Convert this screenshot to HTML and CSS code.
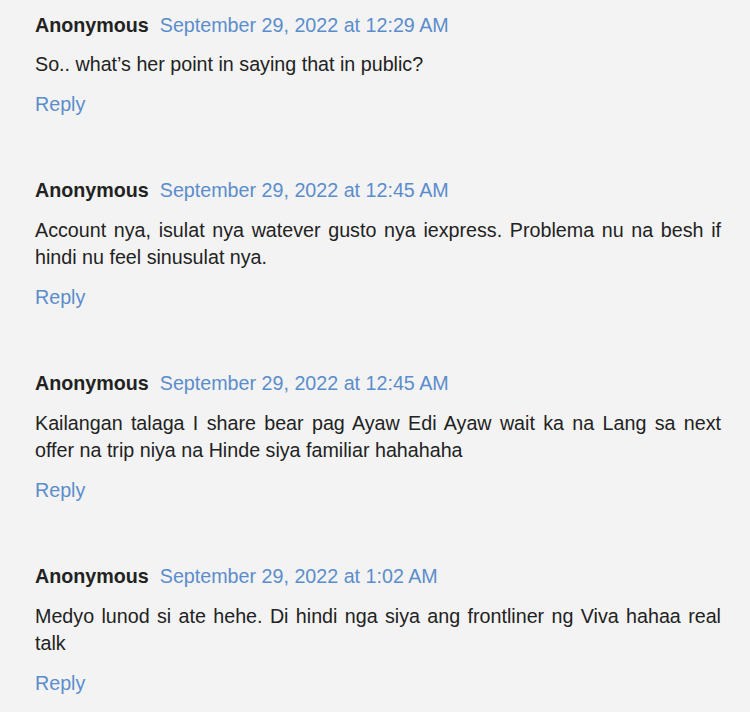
FILE: index.html
```html
<!DOCTYPE html>
<html>
<head>
<meta charset="utf-8">
<link rel="stylesheet" href="styles.css">
</head>
<body>
<div class="comments">
  <div class="comment">
    <div class="head"><span class="author">Anonymous</span><a class="date">September 29, 2022 at 12:29 AM</a></div>
    <p class="text">So.. what’s her point in saying that in public?</p>
    <a class="reply">Reply</a>
  </div>
  <div class="comment">
    <div class="head"><span class="author">Anonymous</span><a class="date">September 29, 2022 at 12:45 AM</a></div>
    <p class="text">Account nya, isulat nya watever gusto nya iexpress. Problema nu na besh if hindi nu feel sinusulat nya.</p>
    <a class="reply">Reply</a>
  </div>
  <div class="comment">
    <div class="head"><span class="author">Anonymous</span><a class="date">September 29, 2022 at 12:45 AM</a></div>
    <p class="text">Kailangan talaga I share bear pag Ayaw Edi Ayaw wait ka na Lang sa next offer na trip niya na Hinde siya familiar hahahaha</p>
    <a class="reply">Reply</a>
  </div>
  <div class="comment">
    <div class="head"><span class="author">Anonymous</span><a class="date">September 29, 2022 at 1:02 AM</a></div>
    <p class="text">Medyo lunod si ate hehe. Di hindi nga siya ang frontliner ng Viva hahaa real talk</p>
    <a class="reply">Reply</a>
  </div>
</div>
</body>
</html>
```

FILE: styles.css
```css
html, body {
  margin: 0;
  padding: 0;
  background: #f3f3f3;
}
body {
  font-family: "Liberation Sans", Arial, sans-serif;
  font-size: 19.7px;
  line-height: 27.5px;
  color: #222;
}
.comments {
  padding: 11.5px 29px 0 35px;
  display: flex;
  flex-direction: column;
  gap: 59px;
}
.comment {
  display: flex;
  flex-direction: column;
  align-items: flex-start;
}
.head {
  display: flex;
  align-items: baseline;
}
.author {
  font-weight: bold;
  color: #222;
}
.date {
  margin-left: 11px;
  color: #5b8dcc;
}
.text {
  margin: 12px 0 12px;
  text-align: justify;
  align-self: stretch;
}
.reply {
  color: #5b8dcc;
}
```
